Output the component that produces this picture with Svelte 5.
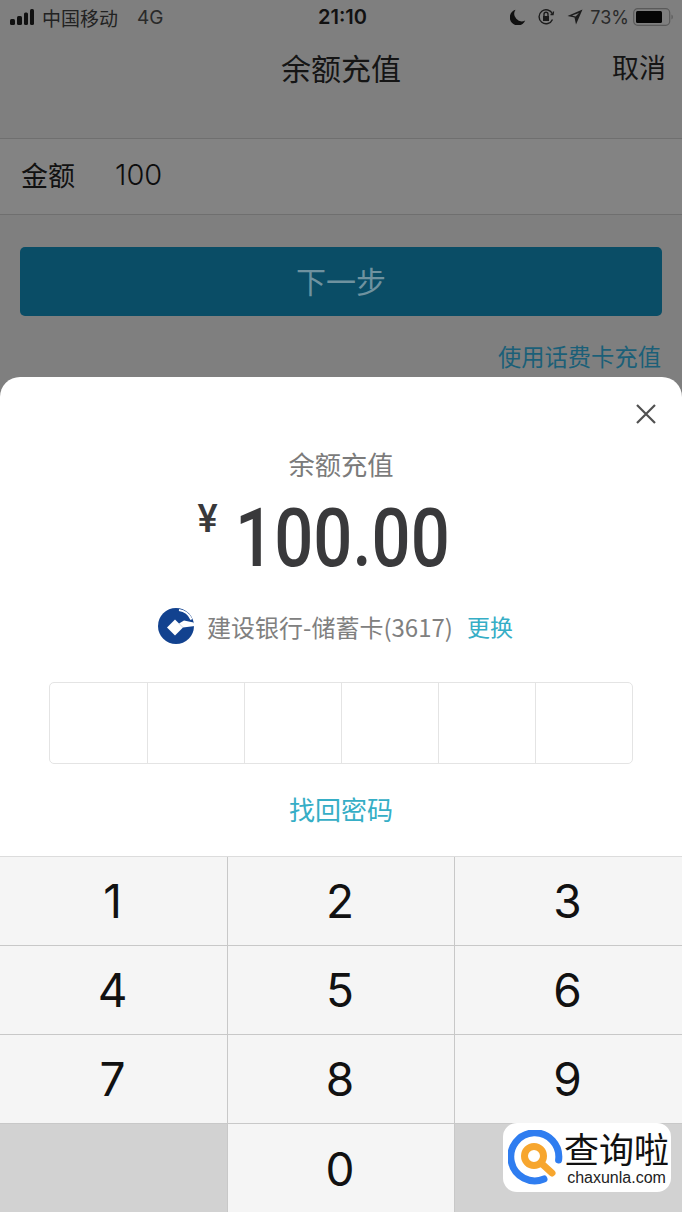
<script>
	const keys = ['1', '2', '3', '4', '5', '6', '7', '8', '9', '', '0', ''];
	const cells = [0, 1, 2, 3, 4, 5];
</script>

<style>
	:global(body) {
		margin: 0;
		background: #7f7f7f;
	}

	.page {
		width: 682px;
		height: 1212px;
		overflow: hidden;
		position: relative;
		background: #7f7f7f;
		font-family: "Noto Sans CJK SC", "Liberation Sans", sans-serif;
		color: #111;
	}

	.behind {
		height: 377px;
		display: flex;
		flex-direction: column;
	}

	.status {
		height: 34px;
		display: grid;
		grid-template-columns: 1fr auto 1fr;
		align-items: center;
		padding: 0 8px;
		font-size: 19px;
		color: #1c1c1c;
		font-family: Inter, "Noto Sans CJK SC", sans-serif;
	}

	.left, .right {
		display: flex;
		align-items: center;
	}

	.right {
		justify-content: flex-end;
	}

	.carrier {
		font-family: "Noto Sans CJK SC", sans-serif;
		font-size: 19px;
		margin-left: 8px;
		color: #222;
	}

	.net {
		margin-left: 19px;
		color: #2a2a2a;
	}

	.time {
		font-size: 20px;
		font-weight: 600;
		color: #111;
		margin-left: 3px;
	}

	.pct {
		margin: 0 4px 0 7px;
		font-size: 18px;
		color: #2a2a2a;
	}

	.nav {
		height: 71px;
		display: flex;
		align-items: center;
		justify-content: center;
		position: relative;
		font-size: 30px;
		color: #151515;
	}

	.nav span {
		margin-top: -6px;
	}

	.cancel {
		position: absolute;
		right: 16px;
		font-size: 27px;
	}

	.row {
		margin-top: 33px;
		height: 77px;
		box-sizing: border-box;
		border-top: 1px solid #6f6f6f;
		border-bottom: 1px solid #6f6f6f;
		background: #838383;
		display: flex;
		align-items: center;
		padding: 0 0 4px 21px;
		font-size: 27px;
	}

	.amount {
		margin-left: 40px;
		font-family: Inter, sans-serif;
		font-size: 29px;
		font-weight: 300;
		color: #0d0d0d;
	}

	.next {
		margin: 32px 20px 0;
		height: 69px;
		box-sizing: border-box;
		padding-bottom: 4px;
		border-radius: 5px;
		background: #0a4d66;
		color: #6f929f;
		display: flex;
		align-items: center;
		justify-content: center;
		font-size: 30px;
	}

	.card-link {
		margin: 25px 21px 0 0;
		text-align: right;
		font-size: 23.3px;
		line-height: 30px;
		color: #1b5f78;
	}

	.sheet {
		height: 835px;
		background: #fff;
		border-radius: 20px 20px 0 0;
		display: flex;
		flex-direction: column;
		align-items: center;
		position: relative;
	}

	.close {
		position: absolute;
		top: 26px;
		right: 25px;
	}

	.title {
		margin-top: 69px;
		font-size: 26.3px;
		line-height: 36px;
		color: #7b7b7b;
	}

	.price {
		margin-top: 13px;
		margin-right: 39px;
		height: 88px;
		display: flex;
		align-items: flex-start;
		color: #39393b;
	}

	.yen {
		font-family: Roboto, sans-serif;
		font-size: 38px;
		font-weight: 500;
		line-height: 44px;
		margin: 2px 17px 0 0;
	}

	.num {
		font-family: Roboto, sans-serif;
		font-size: 81px;
		font-weight: 500;
		line-height: 88px;
		width: 211px;
		white-space: nowrap;
		display: inline-block;
		transform: scaleX(0.85);
		transform-origin: left;
	}

	.bank {
		margin-top: 23px;
		margin-right: 2px;
		display: flex;
		align-items: center;
		height: 40px;
		font-size: 24px;
		color: #808080;
		transform: translateX(-5px);
	}

	.bank svg {
		margin-right: 12px;
	}

	.change {
		margin-left: 14px;
		font-size: 23px;
		color: #36aec6;
	}

	.pin {
		margin-top: 36px;
		width: 584px;
		height: 82px;
		box-sizing: border-box;
		border: 1px solid #e4e4e4;
		border-radius: 5px;
		display: grid;
		grid-template-columns: repeat(6, 1fr);
	}

	.pin div + div {
		border-left: 1px solid #e4e4e4;
	}

	.forgot {
		margin-top: 26px;
		font-size: 26px;
		line-height: 38px;
		color: #36aec6;
	}

	.keypad {
		margin-top: auto;
		width: 100%;
		display: grid;
		grid-template-columns: 228px 227px 227px;
		grid-auto-rows: 89px;
		background: #f5f5f5;
		border-top: 1px solid #dcdcdc;
		box-sizing: border-box;
		height: 356px;
	}

	.key {
		display: flex;
		align-items: center;
		justify-content: center;
		padding-right: 2px;
		font-family: Inter, sans-serif;
		font-size: 46px;
		font-weight: 400;
		color: #111;
		box-sizing: border-box;
		border-bottom: 1px solid #c8c8c8;
		border-right: 1px solid #c8c8c8;
	}

	.key:nth-child(3n) {
		border-right: 0;
	}

	.key:nth-child(n + 10) {
		border-bottom: 0;
	}

	.key.blank {
		background: #d2d2d2;
	}

	.mark {
		position: absolute;
		right: 11px;
		bottom: 20px;
		width: 168px;
		height: 69px;
		background: #fff;
		border-radius: 14px;
		display: flex;
		align-items: center;
		box-sizing: border-box;
		padding-left: 5px;
	}

	.mark svg {
		flex: none;
		margin-top: 2px;
	}

	.mark-text {
		margin-left: -2px;
		display: flex;
		flex-direction: column;
		align-items: center;
		white-space: nowrap;
	}

	.mark-cn {
		font-family: "Noto Sans CJK SC", sans-serif;
		font-size: 35px;
		line-height: 40px;
		color: #111;
	}

	.mark-en {
		font-family: "Liberation Sans", sans-serif;
		font-size: 16px;
		line-height: 20px;
		color: #222;
	}
</style>

<div class="page">
	<div class="behind">
		<div class="status">
			<div class="left">
				<svg width="26" height="16" viewBox="0 0 26 16">
					<rect x="2" y="10" width="5" height="6" rx="1.5" fill="#111" />
					<rect x="9" y="7" width="5" height="9" rx="1.5" fill="#111" />
					<rect x="16" y="3.5" width="4" height="12.5" rx="1.5" fill="#111" />
					<rect x="22" y="0" width="4" height="16" rx="1.5" fill="#111" />
				</svg>
				<span class="carrier">中国移动</span>
				<span class="net">4G</span>
			</div>
			<div class="time">21:10</div>
			<div class="right">
				<svg width="16" height="16" viewBox="0 0 16 16">
					<path d="M5.5 0.8 A8 8 0 1 0 15.2 11.5 A7.5 7.5 0 0 1 5.5 0.8Z" fill="#111" />
				</svg>
				<svg style="margin-left:11px" width="18" height="18" viewBox="0 0 18 18" fill="none" stroke="#1c1c1c" stroke-width="1.4">
					<path d="M15.5 11.5 A7 7 0 1 1 15.5 6" />
					<path d="M13.5 6.5 L16 6.5 L16.5 3.5" />
					<rect x="6" y="8" width="6" height="5" fill="#1c1c1c" stroke="none" />
					<path d="M7 8 V6.3 A2 2 0 0 1 11 6.3 V8" />
				</svg>
				<svg style="margin-left:12px" width="16" height="16" viewBox="0 0 16 16">
					<path d="M15.5 0.5 L0.5 7 L7.5 8.5 L9 15.5Z M12 4 L8.6 7.4 L5 6.6Z" fill="#1c1c1c" fill-rule="evenodd" />
				</svg>
				<span class="pct">73%</span>
				<svg width="41" height="18" viewBox="0 0 41 18">
					<rect x="0.7" y="0.7" width="36" height="16.6" rx="4" fill="none" stroke="#5a5a5a" stroke-width="1.2" />
					<rect x="3" y="3" width="26" height="12" rx="1.5" fill="#050505" />
					<path d="M38.5 6.5 A3 3 0 0 1 38.5 11.5Z" fill="#5a5a5a" />
				</svg>
			</div>
		</div>
		<div class="nav">
			<span>余额充值</span>
			<span class="cancel">取消</span>
		</div>
		<div class="row">
			<span>金额</span>
			<span class="amount">100</span>
		</div>
		<div class="next">下一步</div>
		<div class="card-link">使用话费卡充值</div>
	</div>

	<div class="sheet">
		<svg class="close" width="22" height="22" viewBox="0 0 22 22" fill="none" stroke="#505050" stroke-width="2.2">
			<path d="M2 2 L20 20 M20 2 L2 20" />
		</svg>
		<div class="title">余额充值</div>
		<div class="price">
			<span class="yen">¥</span>
			<span class="num">100.00</span>
		</div>
		<div class="bank">
			<svg width="38" height="38" viewBox="0 0 38 38">
				<circle cx="19" cy="19" r="18" fill="#12428f" />
				<path d="M18 12.5 L26 20.5 L18 28.5 L10 20.5Z" fill="#fff" />
				<path d="M22 16.5 L26 20.5 L38 19 L36.5 15.5 L27 13.5Z" fill="#fff" />
				<path d="M22 3 A16.5 16.5 0 0 1 34.5 12.5" fill="none" stroke="#fff" stroke-width="2.2" />
			</svg>
			<span>建设银行-储蓄卡(3617)</span>
			<span class="change">更换</span>
		</div>
		<div class="pin">
			{#each cells as c (c)}
				<div></div>
			{/each}
		</div>
		<div class="forgot">找回密码</div>
		<div class="keypad">
			{#each keys as k, i (i)}
				<div class="key" class:blank={k === ''}>{k}</div>
			{/each}
		</div>
	</div>

	<div class="mark">
		<svg width="58" height="58" viewBox="0 0 58 58" fill="none">
			<path d="M36 49 A24 24 0 1 1 50.6 30" stroke="#2f7df0" stroke-width="7" stroke-linecap="round" />
			<circle cx="26" cy="26" r="9.5" stroke="#f7a62e" stroke-width="7" />
			<path d="M33 33 L44 43" stroke="#f7a62e" stroke-width="7" stroke-linecap="round" />
		</svg>
		<div class="mark-text">
			<span class="mark-cn">查询啦</span>
			<span class="mark-en">chaxunla.com</span>
		</div>
	</div>
</div>
